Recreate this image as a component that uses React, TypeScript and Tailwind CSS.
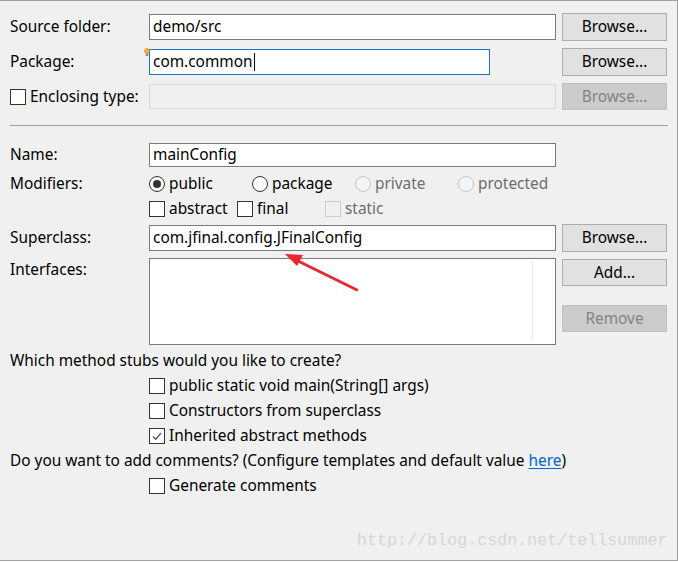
import React from "react"

const font = { fontFamily: '"Noto Sans", "Open Sans", Arial, sans-serif' }

function Box({ checked = false, disabled = false }: { checked?: boolean; disabled?: boolean }) {
  return (
    <span
      className={
        "flex h-[16px] w-[16px] shrink-0 items-center justify-center border " +
        (disabled ? "border-[#cccccc] bg-[#f0f0f0]" : "border-[#333333] bg-white")
      }
    >
      {checked && (
        <svg width="12" height="12" viewBox="0 0 12 12">
          <path d="M2 6.5 L4.8 9.2 L10 3" fill="none" stroke="#555" strokeWidth="1.3" />
        </svg>
      )}
    </span>
  )
}

function Radio({ on = false, disabled = false }: { on?: boolean; disabled?: boolean }) {
  return (
    <span
      className={
        "flex h-[16px] w-[16px] shrink-0 items-center justify-center rounded-full border " +
        (disabled ? "border-[#c4c4c4] bg-[#f4f4f4]" : "border-[#333333] bg-white")
      }
    >
      {on && <span className="h-[8px] w-[8px] rounded-full bg-[#333333]" />}
    </span>
  )
}

function Button({ label, disabled = false, h = "h-[28px]" }: { label: string; disabled?: boolean; h?: string }) {
  return (
    <div
      className={
        "flex w-[105px] shrink-0 items-center justify-center border " +
        h +
        (disabled ? " border-[#bfbfbf] bg-[#cccccc] text-[#838383]" : " border-[#adadad] bg-[#e1e1e1] text-black")
      }
    >
      {label}
    </div>
  )
}

function Label({ children }: { children: React.ReactNode }) {
  return <div className="w-[139px] shrink-0">{children}</div>
}

function CheckRow({ label, checked = false }: { label: string; checked?: boolean }) {
  return (
    <div className="flex h-[25px] items-center">
      <div className="w-[139px] shrink-0" />
      <Box checked={checked} />
      <span className="ml-[4px]">{label}</span>
    </div>
  )
}

export default function App() {
  return (
    <div
      className="relative h-[561px] w-[678px] overflow-hidden border-t border-r border-b border-[#a0a0a0] bg-[#f0f0f0] text-[15.4px] leading-none text-black"
      style={font}
    >
      <div className="flex flex-col pl-[10px] pr-[10px] pt-[12px]">
        {/* source folder */}
        <div className="flex h-[28px] items-center">
          <Label>Source folder:</Label>
          <div className="flex h-[26px] flex-1 items-center border border-[#7a7a7a] bg-white pl-[3px]">demo/src</div>
          <div className="w-[6px]" />
          <Button label="Browse..." />
        </div>

        {/* package */}
        <div className="relative mt-[7px] flex h-[28px] items-center">
          <Label>Package:</Label>
          <div className="flex h-[26px] w-[341px] items-center border border-[#1a74cc] bg-white pl-[3px]">
            com.common
            <span className="ml-px h-[18px] w-px bg-black" />
          </div>
          <div className="flex-1" />
          <Button label="Browse..." />
          <svg className="absolute left-[134px] top-0" width="6" height="9" viewBox="0 0 6 9">
            <circle cx="3" cy="3" r="2.4" fill="#f5b53b" stroke="#d9891a" strokeWidth="0.8" />
            <rect x="1.8" y="5.5" width="2.4" height="2.5" fill="#8a8a8a" />
          </svg>
        </div>

        {/* enclosing type */}
        <div className="mt-[7px] flex h-[27px] items-center">
          <div className="flex w-[139px] shrink-0 items-center">
            <Box />
            <span className="ml-[4px]">Enclosing type:</span>
          </div>
          <div className="h-[25px] flex-1 border border-[#d9d9d9] bg-[#efefef]" />
          <div className="w-[6px]" />
          <Button label="Browse..." disabled h="h-[27px]" />
        </div>

        <div className="mt-[15px] h-px w-[658px] bg-[#a0a0a0]" />

        {/* name */}
        <div className="mt-[17px] flex h-[24px] items-center">
          <Label>Name:</Label>
          <div className="flex h-[24px] w-[407px] items-center border border-[#7a7a7a] bg-white pl-[3px]">mainConfig</div>
        </div>

        {/* modifiers */}
        <div className="mt-[4px] flex h-[25px] items-center">
          <Label>Modifiers:</Label>
          <div className="flex w-[103px] items-center">
            <Radio on />
            <span className="ml-[4px]">public</span>
          </div>
          <div className="flex w-[103px] items-center">
            <Radio />
            <span className="ml-[4px]">package</span>
          </div>
          <div className="flex w-[103px] items-center text-[#6d6d6d]">
            <Radio disabled />
            <span className="ml-[4px]">private</span>
          </div>
          <div className="flex items-center text-[#6d6d6d]">
            <Radio disabled />
            <span className="ml-[4px]">protected</span>
          </div>
        </div>

        <div className="flex h-[25px] items-center">
          <div className="w-[139px] shrink-0" />
          <div className="flex w-[88px] items-center">
            <Box />
            <span className="ml-[4px]">abstract</span>
          </div>
          <div className="flex w-[88px] items-center">
            <Box />
            <span className="ml-[4px]">final</span>
          </div>
          <div className="flex items-center text-[#6d6d6d]">
            <Box disabled />
            <span className="ml-[4px]">static</span>
          </div>
        </div>

        {/* superclass */}
        <div className="mt-[3px] flex h-[28px] items-center">
          <Label>Superclass:</Label>
          <div className="flex h-[26px] flex-1 items-center border border-[#7a7a7a] bg-white pl-[3px]">
            com.jfinal.config.JFinalConfig
          </div>
          <div className="w-[6px]" />
          <Button label="Browse..." />
        </div>

        {/* interfaces */}
        <div className="mt-[6px] flex h-[87px] items-start">
          <div className="w-[139px] shrink-0 pt-[4px]">Interfaces:</div>
          <div className="flex h-[87px] flex-1 justify-end border border-[#7a7a7a] bg-white pr-[22px]">
            <div className="mt-[2px] h-[80px] w-px bg-[#e3ecf8]" />
          </div>
          <div className="w-[6px]" />
          <div className="flex flex-col">
            <div className="mt-px">
              <Button label="Add..." h="h-[27px]" />
            </div>
            <div className="mt-[19px]">
              <Button label="Remove" disabled h="h-[27px]" />
            </div>
          </div>
        </div>

        <div className="mt-[4px] flex h-[24px] items-center">Which method stubs would you like to create?</div>
        <CheckRow label="public static void main(String[] args)" />
        <CheckRow label="Constructors from superclass" />
        <CheckRow label="Inherited abstract methods" checked />
        <div className="flex h-[25px] items-center">
          Do you want to add comments? (Configure templates and default value&nbsp;
          <span className="text-[#0066cc] underline underline-offset-2">here</span>)
        </div>
        <CheckRow label="Generate comments" />
      </div>

      {/* annotation arrow */}
      <svg className="pointer-events-none absolute left-0 top-0" width="678" height="562">
        <line x1="357" y1="289" x2="296" y2="259" stroke="#e8262b" strokeWidth="2.6" strokeLinecap="round" />
        <polygon points="285,253 303,254 297,265" fill="#e8262b" />
      </svg>

      {/* watermark */}
      <div
        className="absolute left-[357px] top-[532px] text-[16.7px] leading-none text-[#d6d6d6]"
        style={{ fontFamily: '"Liberation Mono", "DejaVu Sans Mono", monospace' }}
      >
        http://blog.csdn.net/tellsummer
      </div>
    </div>
  )
}
